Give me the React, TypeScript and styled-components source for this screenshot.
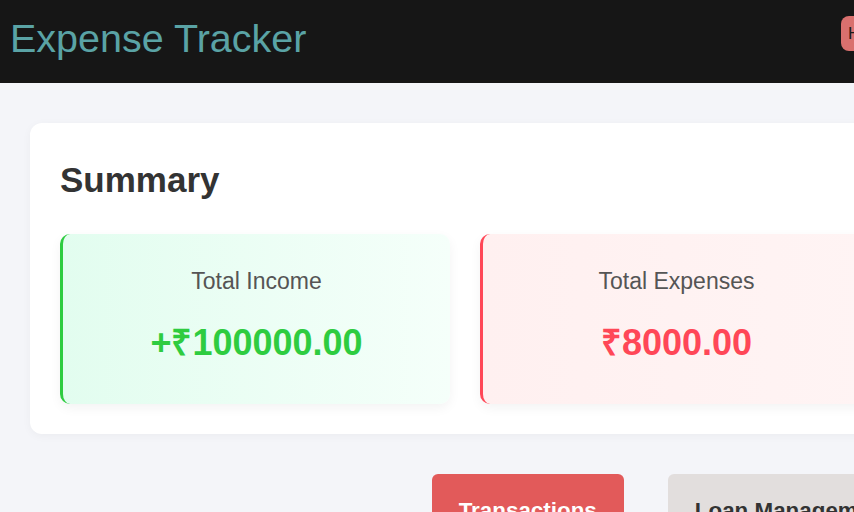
import React from "react";
import styled, { createGlobalStyle } from "styled-components";

const GlobalStyle = createGlobalStyle`
  html, body {
    margin: 0;
    padding: 0;
    background: #f4f5f9;
    font-family: "Liberation Sans", Arial, sans-serif;
  }
`;

const App = () => {
  return (
    <Page>
      <GlobalStyle />
      <Header>
        <Title>Expense Tracker</Title>
        <NavRight>
          <UserBadge>Hi, User</UserBadge>
          <LogoutButton>Logout</LogoutButton>
        </NavRight>
      </Header>
      <Main>
        <Summary>
          <SummaryTitle>Summary</SummaryTitle>
          <StatGrid>
            <StatCard $accent="#2ecc40" $from="#e2fdef" $to="#f5fffa">
              <StatLabel>Total Income</StatLabel>
              <StatValue $color="#2ecc40">+₹100000.00</StatValue>
            </StatCard>
            <StatCard $accent="#ff4757" $from="#fff0f0" $to="#fff4f4">
              <StatLabel>Total Expenses</StatLabel>
              <StatValue $color="#ff4757">₹8000.00</StatValue>
            </StatCard>
            <StatCard $accent="#3498db" $from="#eaf4fd" $to="#f4f9ff">
              <StatLabel>Balance</StatLabel>
              <StatValue $color="#3498db">₹92000.00</StatValue>
            </StatCard>
          </StatGrid>
        </Summary>
        <ButtonRow>
          <TabButton $active>Transactions</TabButton>
          <TabButton>Loan Management</TabButton>
        </ButtonRow>
      </Main>
    </Page>
  );
};

const Page = styled.div`
  width: 1350px;
  min-height: 512px;
`;

const Header = styled.header`
  box-sizing: border-box;
  height: 83px;
  background: #161616;
  display: flex;
  align-items: flex-start;
  justify-content: space-between;
  padding: 16px 10px;
`;

const Title = styled.h1`
  margin: 0;
  font-size: 39.5px;
  font-weight: 400;
  line-height: 1.15;
  color: #5aa3a5;
`;

const NavRight = styled.div`
  width: 499px;
  display: flex;
  align-items: center;
  gap: 16px;
`;

const UserBadge = styled.span`
  box-sizing: border-box;
  height: 35px;
  display: flex;
  align-items: center;
  padding: 0 7px;
  border-radius: 8px;
  background: #d9706e;
  color: #1a1a1a;
  font-size: 17px;
`;

const LogoutButton = styled.button`
  height: 35px;
  padding: 0 16px;
  border: none;
  border-radius: 8px;
  background: #5aa3a5;
  color: #fff;
  font-size: 16px;
  font-family: inherit;
`;

const Main = styled.main`
  padding: 40px 30px;
`;

const Summary = styled.section`
  background: #fff;
  border-radius: 12px;
  padding: 37px 30px 30px;
  box-shadow: 0 2px 10px rgba(0, 0, 0, 0.04);
`;

const SummaryTitle = styled.h2`
  margin: 0 0 34px;
  font-size: 35px;
  font-weight: 700;
  line-height: 1.15;
  color: #333;
`;

const StatGrid = styled.div`
  display: grid;
  grid-template-columns: repeat(3, 1fr);
  gap: 30px;
`;

const StatCard = styled.div<{ $accent: string; $from: string; $to: string }>`
  box-sizing: border-box;
  height: 170px;
  padding-top: 34px;
  border-left: 3px solid ${(p) => p.$accent};
  border-radius: 10px;
  background: linear-gradient(90deg, ${(p) => p.$from}, ${(p) => p.$to});
  box-shadow: 0 4px 12px rgba(0, 0, 0, 0.05);
  text-align: center;
`;

const StatLabel = styled.h3`
  margin: 0;
  font-size: 23px;
  font-weight: 400;
  line-height: 1.15;
  color: #555;
`;

const StatValue = styled.p<{ $color: string }>`
  margin: 27px 0 0;
  font-size: 36px;
  font-weight: 700;
  line-height: 1.15;
  color: ${(p) => p.$color};
`;

const ButtonRow = styled.nav`
  display: flex;
  justify-content: center;
  gap: 44px;
  margin-top: 40px;
`;

const TabButton = styled.button<{ $active?: boolean }>`
  padding: 24px 27px;
  border: none;
  border-radius: 6px;
  background: ${(p) => (p.$active ? "#e25a5a" : "#e2dedd")};
  color: ${(p) => (p.$active ? "#fff" : "#333")};
  font-family: inherit;
  font-size: 22.4px;
  font-weight: 700;
`;

export default App;
